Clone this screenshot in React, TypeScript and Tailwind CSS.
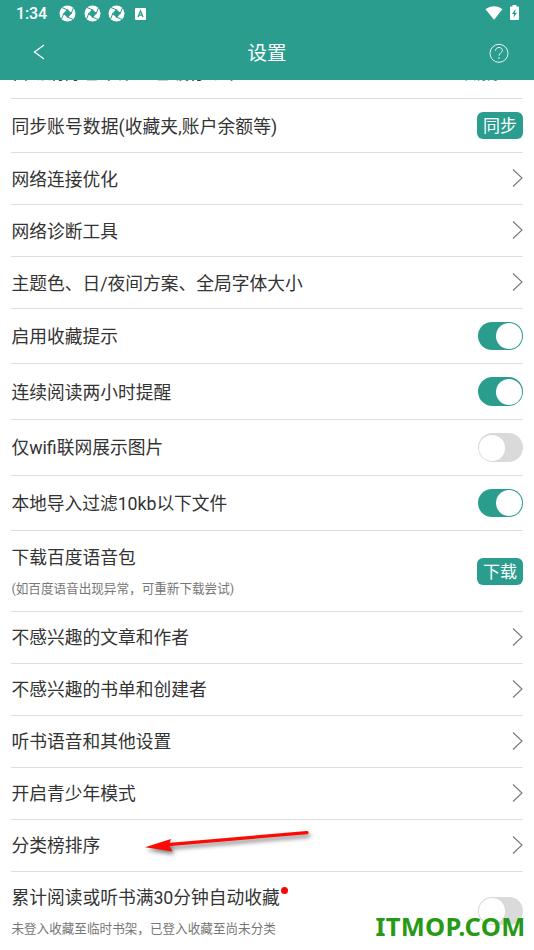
import type { ReactNode } from 'react';

function Chevron() {
  return (
    <svg className="mb-[2px]" width="11" height="20" viewBox="0 0 11 20" fill="none" stroke="#777" strokeWidth="1.1">
      <path d="M1 1.5L10 10L1 18.5" />
    </svg>
  );
}

function Toggle({ on = false }: { on?: boolean }) {
  return (
    <div className={`flex h-[28.5px] w-[45px] items-center rounded-full px-px ${on ? 'justify-end bg-[#2a9d8f]' : 'justify-start bg-[#dadada]'}`}>
      <div className="size-[26px] rounded-full bg-white" />
    </div>
  );
}

function Badge({ children }: { children: ReactNode }) {
  return (
    <div className="flex h-[27px] w-[46px] items-center justify-center rounded-[6px] bg-[#2a9d8f] pt-[2px] text-[17px] leading-none text-white">
      {children}
    </div>
  );
}

type RowProps = {
  label: string;
  note?: string;
  dot?: boolean;
  height: string;
  textClass?: string;
  last?: boolean;
  children?: ReactNode;
};

function Row({ label, note, dot, height, textClass = '', last, children }: RowProps) {
  return (
    <div className={`flex shrink-0 items-center justify-between ${height} ${last ? '' : 'border-b border-[#dedede]'}`}>
      <div className={`pl-[0.4px] ${textClass}`}>
        <div className="flex items-start">
          <span className="text-[17.75px] leading-[26px]">{label}</span>
          {dot && <span className="mt-[2px] ml-px size-[7px] rounded-full bg-[#f60808]" />}
        </div>
        {note && <div className="mt-[8px] text-[12.6px] leading-[20px] text-[#777]">{note}</div>}
      </div>
      {children}
    </div>
  );
}

function Aperture() {
  return (
    <svg width="17" height="17" viewBox="0 0 17 17">
      <circle cx="8.5" cy="8.5" r="8" fill="#fff" />
      <path d="M8 4.2L12.8 8L9 12.8L4.2 9Z" fill="#2a9d8f" />
      <path d="M9.4 5.2L3 2.6M11.8 9.4L14.4 3M7.6 11.8L14 14.4M5.2 7.6L2.6 14" stroke="#2a9d8f" strokeWidth="1" />
    </svg>
  );
}

function StatusBar() {
  return (
    <div className="flex h-7 items-center pr-[15px] pl-4">
      <span className="w-[43px] text-[16px] leading-none font-medium tracking-[-0.1px]">1:34</span>
      <div className="flex items-center gap-[7.5px] pb-px">
        <Aperture />
        <Aperture />
        <Aperture />
      </div>
      <svg className="ml-[10px]" width="11" height="12" viewBox="0 0 11 12">
        <rect width="11" height="12" rx="1" fill="#fff" />
        <path d="M3 9L5.5 3L8 9M4 7.2H7" fill="none" stroke="#2a9d8f" strokeWidth="1.3" />
      </svg>
      <svg className="mb-[2px] ml-auto" width="18" height="14" viewBox="0 0 18 14">
        <path d="M0.5 3.2C5.5 -0.7 12.5 -0.7 17.5 3.2L9 13.8Z" fill="#fff" />
      </svg>
      <svg className="mb-[3px] ml-[7px]" width="9" height="15" viewBox="0 0 9 15">
        <path d="M2.5 0H6.5V1.5H8C8.6 1.5 9 1.9 9 2.5V14C9 14.6 8.6 15 8 15H1C.4 15 0 14.6 0 14V2.5C0 1.9 .4 1.5 1 1.5H2.5Z" fill="#fff" />
        <path d="M5.5 4L2 8.9H4.2L3.6 12.8L7 7.8H5Z" fill="#2a9d8f" />
      </svg>
    </div>
  );
}

function Header() {
  return (
    <header className="relative z-10 h-20 shrink-0 bg-[#2a9d8f] text-white">
      <StatusBar />
      <div className="flex h-[50px] items-center justify-between pr-[25px] pl-[33px]">
        <svg className="mb-[2px]" width="12" height="16" viewBox="0 0 12 16" fill="none" stroke="#fff" strokeWidth="1.2">
          <path d="M11 1L1.5 8L11 15" />
        </svg>
        <h1 className="pt-[2px] text-[19.5px] leading-none">设置</h1>
        <svg width="20" height="20" viewBox="0 0 20 20" fill="none" stroke="#fff" strokeWidth="0.9">
          <circle cx="10" cy="10.3" r="9" />
          <path d="M6.5 7.8C6.6 5.6 8 4.5 10 4.5C12 4.5 13.4 5.7 13.4 7.5C13.4 9.7 10 10.1 10 12.7" />
          <path d="M10 14.4V15.8" strokeWidth="1.3" />
        </svg>
      </div>
    </header>
  );
}

export default function App() {
  return (
    <div className="relative flex h-[950px] w-[534px] flex-col overflow-hidden bg-white font-[Roboto,'Noto_Sans_CJK_SC',sans-serif] text-[#333]">
      <Header />
      <main className="-mt-[33px] flex flex-col px-[11px]">
        <Row label="自动清除已下架、已缓存章节" height="h-[52px]">
          <span className="pt-[4px] pr-[22px] text-[14px] text-[#2a9d8f]">不清除</span>
        </Row>
        <Row label="同步账号数据(收藏夹,账户余额等)" height="h-[54px]" textClass="pt-[2px] tracking-[0.1px]">
          <Badge>同步</Badge>
        </Row>
        <Row label="网络连接优化" height="h-[52px]" textClass="pt-[2px]"><Chevron /></Row>
        <Row label="网络诊断工具" height="h-[52px]" textClass="pt-[2px]"><Chevron /></Row>
        <Row label="主题色、日/夜间方案、全局字体大小" height="h-[52px]" textClass="pt-[2px]"><Chevron /></Row>
        <Row label="启用收藏提示" height="h-[55px]" textClass="pt-[2px]"><Toggle on /></Row>
        <Row label="连续阅读两小时提醒" height="h-[56px]" textClass="pt-[2px]"><Toggle on /></Row>
        <Row label="仅wifi联网展示图片" height="h-[56px]" textClass="pt-px"><Toggle /></Row>
        <Row label="本地导入过滤10kb以下文件" height="h-[55px]" textClass="pt-[2px] tracking-[-0.04px]"><Toggle on /></Row>
        <Row label="下载百度语音包" note="(如百度语音出现异常，可重新下载尝试)" height="h-[81px]" textClass="pt-[2px]">
          <Badge>下载</Badge>
        </Row>
        <Row label="不感兴趣的文章和作者" height="h-[52px]"><Chevron /></Row>
        <Row label="不感兴趣的书单和创建者" height="h-[52px]"><Chevron /></Row>
        <Row label="听书语音和其他设置" height="h-[52px]"><Chevron /></Row>
        <Row label="开启青少年模式" height="h-[52px]"><Chevron /></Row>
        <Row label="分类榜排序" height="h-[52px]"><Chevron /></Row>
        <Row label="累计阅读或听书满30分钟自动收藏" note="未登入收藏至临时书架，已登入收藏至尚未分类" dot height="h-[78px]" textClass="pt-[2px]" last>
          <Toggle />
        </Row>
      </main>

      <svg className="absolute top-[820px] left-[130px] drop-shadow-[2px_3px_2px_rgba(0,0,0,0.5)]" width="190" height="40" viewBox="0 0 190 40">
        <path d="M38 24.6L177 12.6" stroke="#fb0a06" strokeWidth="3.2" strokeLinecap="round" />
        <path d="M15 27.3L41 19L39 25L42.5 31.5Z" fill="#fb0a06" />
      </svg>
      <div className="absolute top-[908px] left-[375.5px] font-['Noto_Sans',sans-serif] text-[25.5px] leading-[36px] font-bold tracking-[0.3px] whitespace-nowrap text-[#269a16]">
        ITMOP.COM
      </div>
    </div>
  );
}
